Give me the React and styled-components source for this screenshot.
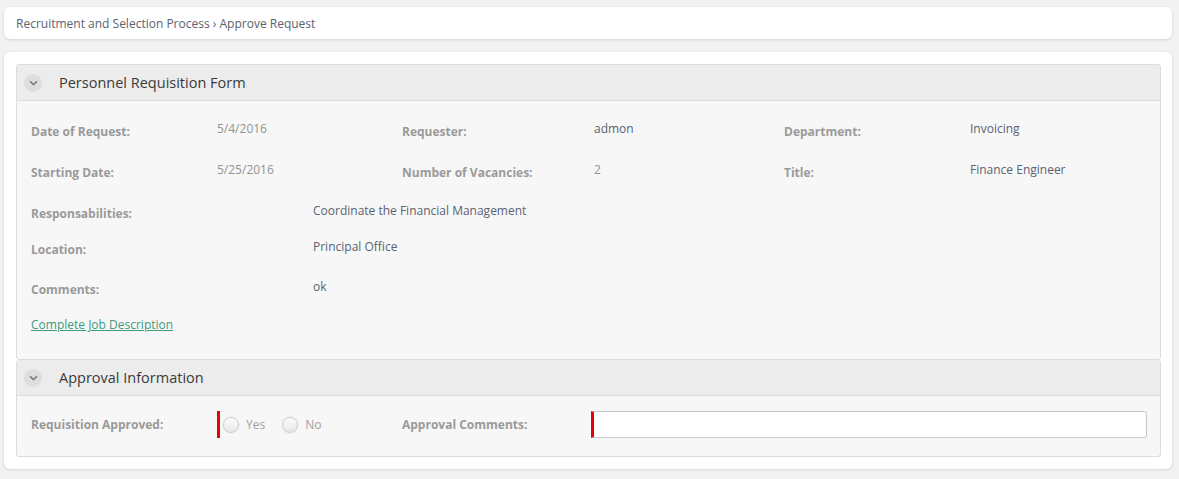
import React from 'react';
import styled, { createGlobalStyle } from 'styled-components';

const GlobalStyle = createGlobalStyle`
  html, body {
    margin: 0;
    padding: 0;
    background: #f2f2f2;
    font-family: "Open Sans", "Liberation Sans", sans-serif;
  }
`;

const Page = styled.div`
  padding: 7px 7px 10px 4px;
  display: flex;
  flex-direction: column;
  gap: 13px;
`;

const Card = styled.div`
  background: #fff;
  border-radius: 6px;
  box-shadow: 0 1px 3px rgba(0, 0, 0, 0.13);
`;

const Breadcrumb = styled(Card)`
  height: 32px;
  display: flex;
  align-items: center;
  padding-left: 12px;
  font-size: 12px;
  color: #5b6270;
`;

const MainCard = styled(Card)`
  padding: 12px 11px 12px 12px;
`;

const Panel = styled.section`
  border: 1px solid #dcdcdc;
  border-radius: 3px;
  background: #f7f7f7;
  & + & {
    border-top: none;
  }
`;

const PanelHeader = styled.div`
  height: 35px;
  display: flex;
  align-items: center;
  background: #ececec;
  border-bottom: 1px solid #dcdcdc;
  padding-left: 7px;
`;

const Toggle = styled.span`
  width: 18px;
  height: 18px;
  border-radius: 50%;
  background: #dedede;
  display: flex;
  align-items: center;
  justify-content: center;
  margin-right: 17px;
`;

const PanelTitle = styled.h2`
  margin: 0;
  font-size: 14.5px;
  font-weight: 400;
  color: #3a3a3a;
`;

const PanelBody = styled.div`
  padding: ${(p) => p.$pad};
`;

const FieldRow = styled.div`
  display: grid;
  grid-template-columns: ${(p) => p.$cols};
  height: ${(p) => p.$h}px;
  font-size: 12px;
  line-height: 17px;
`;

const Label = styled.div`
  font-weight: 700;
  color: #9a9a9a;
  padding-top: ${(p) => (p.$flat ? 0 : 3)}px;
`;

const Value = styled.div`
  color: ${(p) => (p.$muted ? '#939393' : '#5b6270')};
`;

const JobLink = styled.a`
  font-size: 12px;
  line-height: 17px;
  color: #3d9a7d;
  text-decoration: underline;
  cursor: pointer;
`;

const ApprovalRow = styled.div`
  display: grid;
  grid-template-columns: 186px 185px 189px 1fr;
  align-items: center;
  height: 27px;
  font-size: 12px;
`;

const Required = styled.div`
  height: 27px;
  display: flex;
  align-items: center;
  border-left: 3px solid #e8000b;
`;

const RadioOption = styled.label`
  display: flex;
  align-items: center;
  gap: 7px;
  color: #a0a0a0;
  margin-left: ${(p) => p.$ml}px;
`;

const RadioDot = styled.span`
  width: 14px;
  height: 14px;
  border-radius: 50%;
  border: 1px solid #cfcfcf;
  background: linear-gradient(#fdfdfd, #e6e6e6);
  box-shadow: 0 0 2px rgba(0, 0, 0, 0.12);
`;

const TextInput = styled.input`
  box-sizing: border-box;
  width: 100%;
  height: 27px;
  border: 1px solid #c8c8c8;
  border-left: 3px solid #e8000b;
  border-radius: 0 3px 3px 0;
  background: #fff;
  outline: none;
  font-family: inherit;
  font-size: 12px;
`;

const Chevron = () => (
  <svg width="9" height="6" viewBox="0 0 9 6">
    <path d="M1 1.2 L4.5 4.6 L8 1.2" fill="none" stroke="#7a7a7a" strokeWidth="1.6" />
  </svg>
);

const cols3 = '186px 185px 192px 190px 186px 1fr';
const colsWide = '282px 1fr';

const App = () => (
  <>
    <GlobalStyle />
    <Page>
      <Breadcrumb>Recruitment and Selection Process › Approve Request</Breadcrumb>
      <MainCard>
        <Panel>
          <PanelHeader>
            <Toggle><Chevron /></Toggle>
            <PanelTitle>Personnel Requisition Form</PanelTitle>
          </PanelHeader>
          <PanelBody $pad="19px 14px 25px 14px">
            <FieldRow $cols={cols3} $h={41}>
              <Label>Date of Request:</Label>
              <Value $muted>5/4/2016</Value>
              <Label>Requester:</Label>
              <Value>admon</Value>
              <Label>Department:</Label>
              <Value>Invoicing</Value>
            </FieldRow>
            <FieldRow $cols={cols3} $h={41}>
              <Label>Starting Date:</Label>
              <Value $muted>5/25/2016</Value>
              <Label>Number of Vacancies:</Label>
              <Value $muted>2</Value>
              <Label>Title:</Label>
              <Value>Finance Engineer</Value>
            </FieldRow>
            <FieldRow $cols={colsWide} $h={36}>
              <Label>Responsabilities:</Label>
              <Value>Coordinate the Financial Management</Value>
            </FieldRow>
            <FieldRow $cols={colsWide} $h={40}>
              <Label>Location:</Label>
              <Value>Principal Office</Value>
            </FieldRow>
            <FieldRow $cols={colsWide} $h={34}>
              <Label>Comments:</Label>
              <Value>ok</Value>
            </FieldRow>
            <JobLink>Complete Job Description</JobLink>
          </PanelBody>
        </Panel>
        <Panel>
          <PanelHeader>
            <Toggle><Chevron /></Toggle>
            <PanelTitle>Approval Information</PanelTitle>
          </PanelHeader>
          <PanelBody $pad="15px 13px 18px 14px">
            <ApprovalRow>
              <Label $flat>Requisition Approved:</Label>
              <Required>
                <RadioOption $ml={3}><RadioDot />Yes</RadioOption>
                <RadioOption $ml={17}><RadioDot />No</RadioOption>
              </Required>
              <Label $flat>Approval Comments:</Label>
              <TextInput type="text" />
            </ApprovalRow>
          </PanelBody>
        </Panel>
      </MainCard>
    </Page>
  </>
);

export default App;
